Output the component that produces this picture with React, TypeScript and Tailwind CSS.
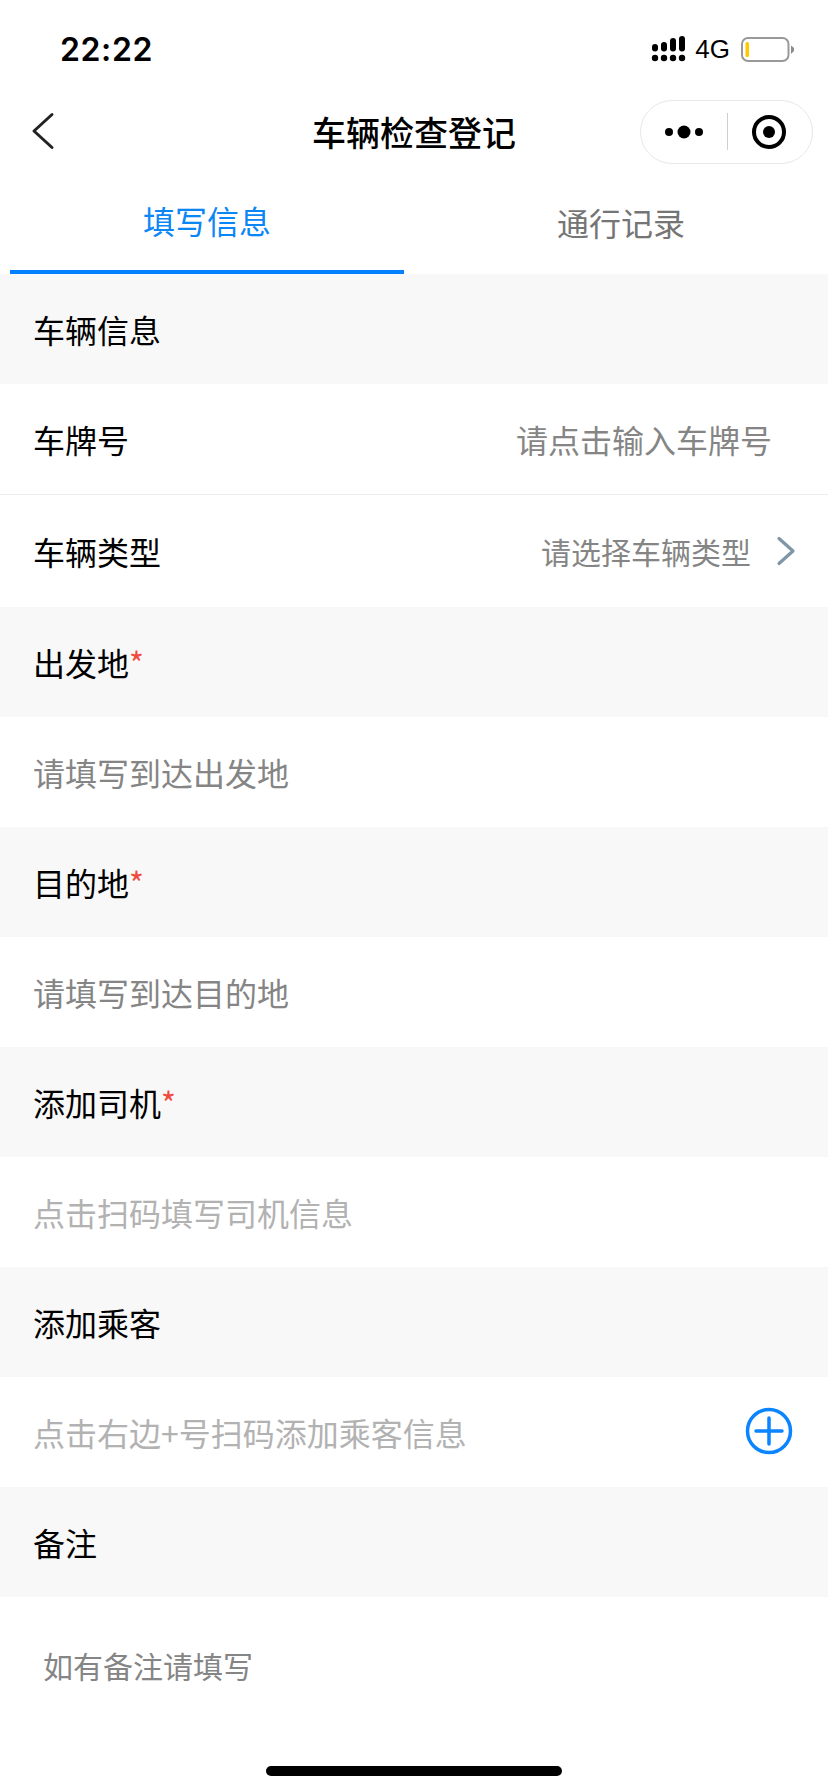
import React from "react";

const cjk = "font-['Noto_Sans_CJK_SC','Noto_Sans',sans-serif]";

function Header({ text, required }: { text: string; required?: boolean }) {
  return (
    <div className="h-[110px] bg-[#f8f8f8] flex items-center pl-[33px] text-[32px] leading-[44px] text-black">
      <span>{text}</span>
      {required && <span className="text-[#f04c3e]">*</span>}
    </div>
  );
}

function Field({ text, light }: { text: string; light?: boolean }) {
  return (
    <div className={`h-[110px] bg-white flex items-center pl-[33px] text-[32px] leading-[44px] ${light ? "text-[#b2b2b2]" : "text-[#858585]"}`}>
      {text}
    </div>
  );
}

function Signal() {
  const cols = [
    { x: 653, y: 43, h: 7.5 },
    { x: 662, y: 41, h: 9.5 },
    { x: 671, y: 37, h: 13.5 },
    { x: 680, y: 35, h: 15.5 },
  ];
  return (
    <svg width="36" height="28" viewBox="652 34 36 28" className="block">
      {cols.map((c) => (
        <g key={c.x} fill="#000">
          <rect x={c.x} y={c.y} width="6" height={c.h} rx="3" />
          <circle cx={c.x + 3} cy="57" r="3.2" />
        </g>
      ))}
    </svg>
  );
}

function Battery() {
  return (
    <svg width="54" height="26" viewBox="741 36 54 26" className="block">
      <rect x="742" y="38" width="46.5" height="23" rx="6" fill="none" stroke="#999" strokeWidth="2" />
      <rect x="745.5" y="42" width="3.5" height="15" rx="1.5" fill="#ffc800" />
      <path d="M791 45.5 L794 48 V51 L791 54 Z" fill="#8c8c8c" />
    </svg>
  );
}

export default function App() {
  return (
    <div className={`w-[828px] h-[1792px] bg-white flex flex-col overflow-hidden ${cjk}`}>
      <div className="h-[88px] flex items-start justify-between pl-[60px] pr-[33px] shrink-0">
        <span className="mt-[30px] text-[32px] leading-[40px] font-semibold text-black font-['Inter',sans-serif] tracking-[0.6px]">22:22</span>
        <div className="flex items-center mt-[34px]">
          <Signal />
          <span className="ml-[8px] text-[26px] leading-[30px] text-black font-['Liberation_Sans',sans-serif]">4G</span>
          <span className="ml-[11px]"><Battery /></span>
        </div>
      </div>

      <div className="h-[88px] grid grid-cols-[1fr_auto_1fr] items-center shrink-0">
        <div className="pl-[31px] flex items-center">
          <svg width="24" height="38" viewBox="0 0 24 38" className="block mt-[-2px]">
            <path d="M21 2.5 L3 19 L21 35.5" fill="none" stroke="#222" strokeWidth="3" strokeLinecap="round" strokeLinejoin="round" />
          </svg>
        </div>
        <div className="text-[34px] leading-[48px] font-medium text-black mt-[-1px]">车辆检查登记</div>
        <div className="flex justify-end pr-[15px]">
          <div className="w-[173px] h-[64px] mt-[-1px] rounded-full border border-[#e8e8e8] flex items-center">
            <div className="w-[86px] flex justify-center">
              <svg width="46" height="16" viewBox="0 0 46 16" className="block ml-[6px]">
                <circle cx="5" cy="8" r="4" fill="#000" />
                <circle cx="20" cy="8" r="6.5" fill="#000" />
                <circle cx="35" cy="8" r="4" fill="#000" />
              </svg>
            </div>
            <div className="w-px h-[37px] bg-[#cfcfcf]" />
            <div className="flex-1 flex justify-center">
              <svg width="36" height="36" viewBox="0 0 36 36" className="block mr-[2px]">
                <circle cx="18" cy="18" r="15" fill="none" stroke="#000" strokeWidth="4" />
                <circle cx="18" cy="18" r="6" fill="#000" />
              </svg>
            </div>
          </div>
        </div>
      </div>

      <div className="h-[98px] flex shrink-0">
        <div className="w-[414px] px-[10px]">
          <div className="h-[98px] border-b-4 border-[#0080ff] flex items-center justify-center pb-[6px] text-[32px] leading-[44px] text-[#0a86f5]">填写信息</div>
        </div>
        <div className="w-[414px] flex items-center justify-center pb-[6px] text-[32px] leading-[44px] text-[#757575]">通行记录</div>
      </div>

      <Header text="车辆信息" />
      <div className="h-[111px] bg-white border-b border-[#ececec] flex items-center justify-between pl-[33px] pr-[56px] text-[32px] leading-[44px]">
        <span className="text-black">车牌号</span>
        <span className="text-[#858585]">请点击输入车牌号</span>
      </div>
      <div className="h-[112px] bg-white flex items-center pl-[33px] pr-[32px] text-[32px] leading-[44px]">
        <span className="text-black">车辆类型</span>
        <span className="ml-auto text-[30px] text-[#858585]">请选择车辆类型</span>
        <svg width="20" height="30" viewBox="0 0 20 30" className="block ml-[25px]">
          <path d="M3 2.5 L17 15 L3 27.5" fill="none" stroke="#7f96a6" strokeWidth="3.2" strokeLinecap="round" strokeLinejoin="round" />
        </svg>
      </div>

      <Header text="出发地" required />
      <Field text="请填写到达出发地" />
      <Header text="目的地" required />
      <Field text="请填写到达目的地" />
      <Header text="添加司机" required />
      <Field text="点击扫码填写司机信息" light />
      <Header text="添加乘客" />
      <div className="h-[110px] bg-white flex items-center justify-between pl-[33px] pr-[35px] text-[32px] leading-[44px] text-[#b2b2b2]">
        <span>点击右边+号扫码添加乘客信息</span>
        <svg width="48" height="48" viewBox="0 0 48 48" className="block mt-[-2px]">
          <circle cx="24" cy="24" r="21.5" fill="none" stroke="#0a84ff" strokeWidth="3.5" />
          <path d="M24 11 V37 M11 24 H37" fill="none" stroke="#0a84ff" strokeWidth="3.5" strokeLinecap="round" />
        </svg>
      </div>
      <Header text="备注" />
      <div className="flex-1 bg-white flex flex-col">
        <div className="pt-[46px] pl-[43px] text-[30px] leading-[44px] text-[#858585]">如有备注请填写</div>
        <div className="mt-auto mb-[16px] mx-auto w-[296px] h-[10px] rounded-full bg-black" />
      </div>
    </div>
  );
}
